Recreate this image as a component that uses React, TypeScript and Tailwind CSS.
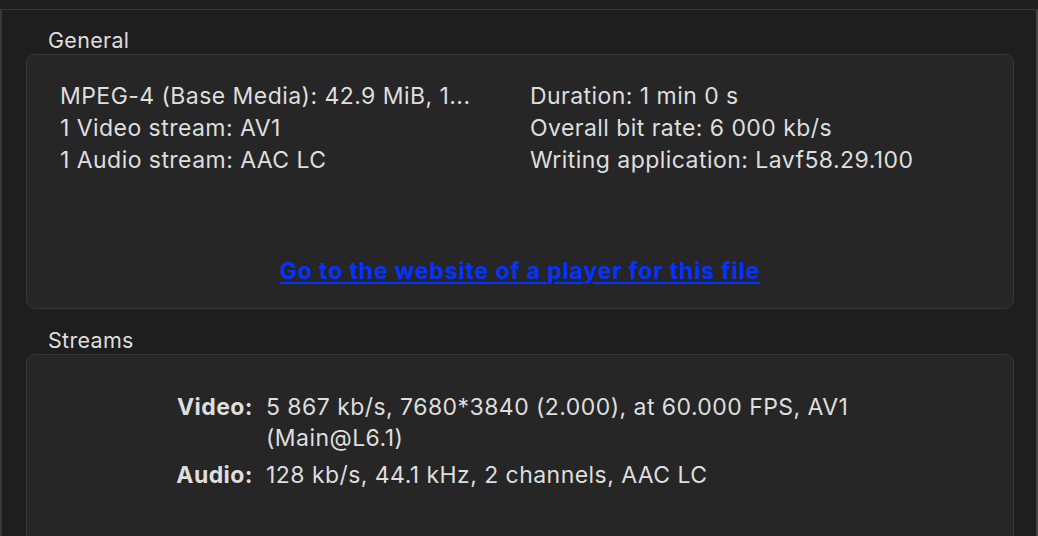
import React from 'react';

const generalLeft = [
  'MPEG-4 (Base Media): 42.9 MiB, 1...',
  '1 Video stream: AV1',
  '1 Audio stream: AAC LC',
];

const generalRight = [
  'Duration: 1 min 0 s',
  'Overall bit rate: 6 000 kb/s',
  'Writing application: Lavf58.29.100',
];

const streams = [
  { label: 'Video:', lines: ['5 867 kb/s, 7680*3840 (2.000), at 60.000 FPS, AV1', '(Main@L6.1)'] },
  { label: 'Audio:', lines: ['128 kb/s, 44.1 kHz, 2 channels, AAC LC'] },
];

export default function App() {
  return (
    <div
      className="w-[1038px] h-[536px] overflow-hidden bg-[#1e1e1e] text-[#dedede] flex flex-col"
      style={{ fontFamily: 'Inter, "Noto Sans", sans-serif' }}
    >
      <div className="h-[10px] shrink-0 border-b border-[#383838]" />
      <div className="flex-1 flex min-h-0">
        <div className="w-[2px] bg-[#3a3a3a] shrink-0" />
        <div className="flex-1 flex flex-col pl-[24px] pr-[22px] min-w-0">
          <div className="h-[44px] flex items-end pl-[22px] pb-[1px] text-[21.5px] leading-[26px] tracking-[0.3px]">General</div>
          <div className="h-[255px] shrink-0 rounded-[9px] border border-[#383838] bg-[#262626] flex flex-col">
            <div className="grid grid-cols-[470px_1fr] pl-[33px] pt-[25px] text-[23px] leading-[32px] tracking-[0.45px]">
              <div className="flex flex-col">
                {generalLeft.map((t) => (
                  <div key={t}>{t}</div>
                ))}
              </div>
              <div className="flex flex-col">
                {generalRight.map((t) => (
                  <div key={t}>{t}</div>
                ))}
              </div>
            </div>
            <div className="mt-[81px] text-center">
              <a
                href="#"
                className="text-[23px] leading-[28px] font-bold tracking-[0.85px] text-[#0433ff] underline underline-offset-[3px] decoration-[2px]"
              >
                Go to the website of a player for this file
              </a>
            </div>
          </div>
          <div className="h-[45px] flex items-end pl-[22px] pb-[1px] text-[21.5px] leading-[26px] tracking-[0.3px]">Streams</div>
          <div className="flex-1 rounded-t-[9px] border border-b-0 border-[#383838] bg-[#262626] pt-[37px]">
            <div className="flex flex-col gap-[6px] text-[23px] leading-[31px] tracking-[0.45px]">
              {streams.map((s) => (
                <div key={s.label} className="flex">
                  <div className="w-[226px] text-right font-bold shrink-0">{s.label}</div>
                  <div className="pl-[13px] flex flex-col">
                    {s.lines.map((l) => (
                      <div key={l}>{l}</div>
                    ))}
                  </div>
                </div>
              ))}
            </div>
          </div>
        </div>
        <div className="w-[2px] bg-[#444444] shrink-0" />
      </div>
    </div>
  );
}
